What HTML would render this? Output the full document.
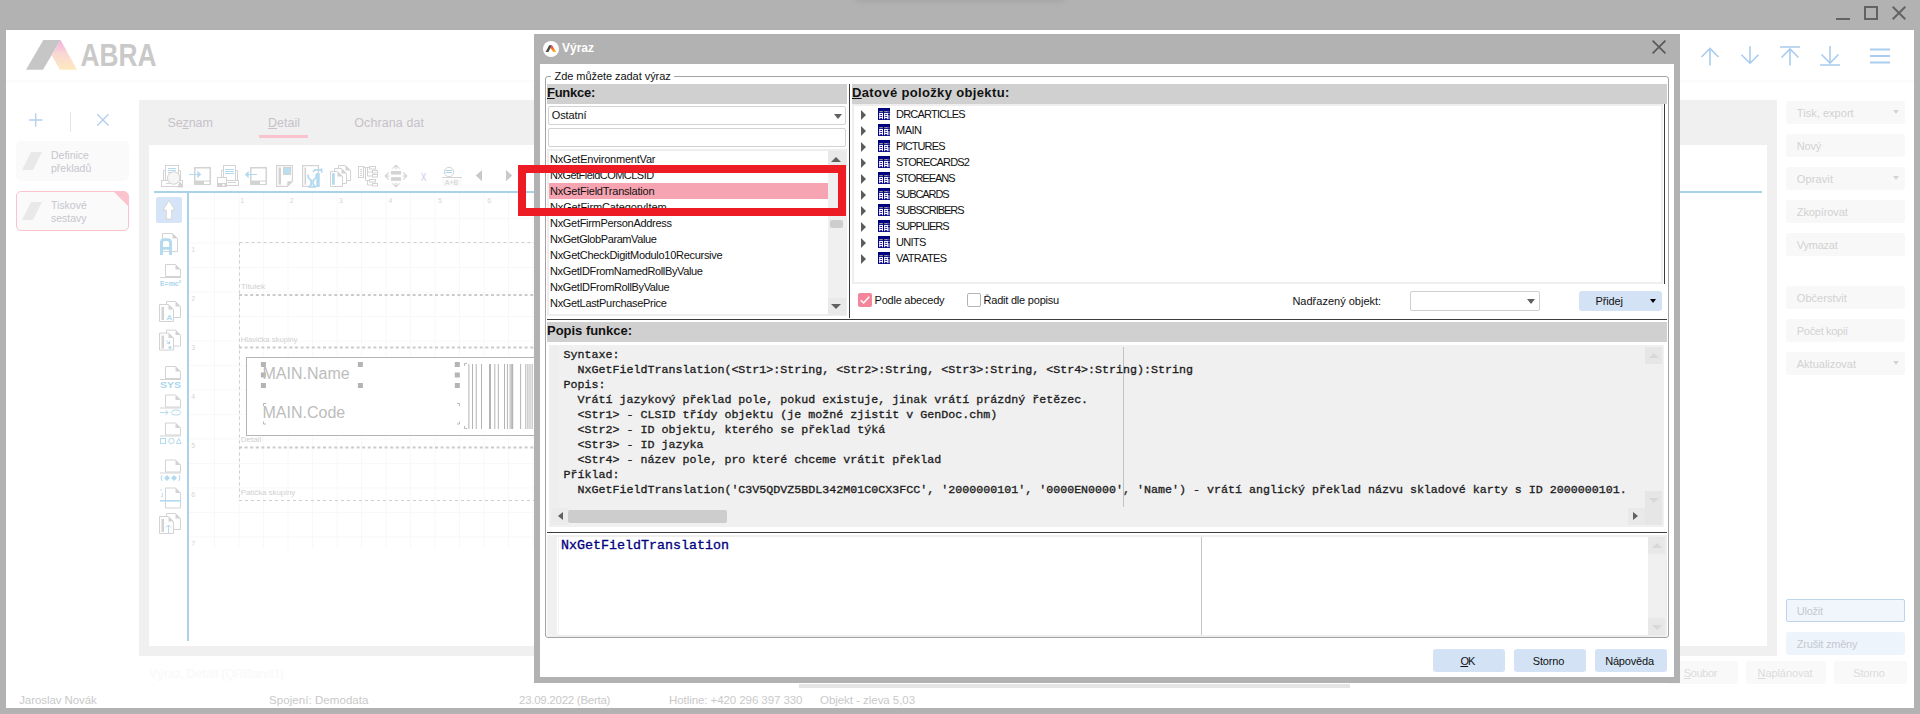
<!DOCTYPE html>
<html lang="cs">
<head>
<meta charset="utf-8">
<title>Výraz</title>
<style>
*{box-sizing:border-box;margin:0;padding:0}
html,body{width:1920px;height:714px;overflow:hidden}
body{background:#b2b2b2;position:relative;font-family:"Liberation Sans",sans-serif;font-size:11px;color:#111}
.a{position:absolute}
.t{position:absolute;white-space:nowrap;line-height:1}
u{text-decoration-thickness:1px;text-underline-offset:1px}
/* faded background app */
.app{left:6px;top:30px;width:1908px;height:678px;background:#fff}
.band{left:6px;top:80px;width:1908px;height:4px;background:linear-gradient(#fbfbfb,#fdfdfd 60%,#fff)}
.gp{left:139px;top:100px;width:1638px;height:556px;background:#f0f0f0}
.wp{left:149px;top:145px;width:1618px;height:501px;background:#fff}
.card{left:16px;width:113px;height:40px;background:#fafafa;border-radius:5px}
.card .t{left:35px;font-size:10.5px;line-height:12.5px;color:#c6c6cc;white-space:normal}
.para{left:6px;top:11px;width:20px;height:18px;background:#e9e9e9;clip-path:polygon(45% 0,100% 0,55% 100%,0 100%)}
.tab{font-size:12.5px;color:#c6c2c8;top:117px}
.rb{left:1786px;width:119px;height:23px;background:#f8f8f8;border-radius:3px;font-size:11px;color:#d2d2d2;line-height:25px;padding-left:10.8px;white-space:nowrap;overflow:hidden}
.rb i{position:absolute;right:6px;top:9px;border:3.5px solid transparent;border-top:4px solid #d4d4d4;border-bottom:0}
.st{top:695px;font-size:11.5px;color:#c9c9c9}
/* dialog */
.dlg{left:534px;top:34px;width:1146px;height:649px;background:#b2b2b2}
.dlgin{left:540px;top:64px;width:1134px;height:613px;background:#fff}
.hb{background:#d0d0d0;height:20px}
.hb .t{left:0;top:2px;font-size:13px;font-weight:bold;color:#111;letter-spacing:-.1px}
.btn{background:#d3e3f5;border-radius:3px;height:23px;text-align:center;line-height:25px;padding-right:3px;overflow:hidden;font-size:11px;color:#111;letter-spacing:-.2px}
.li{left:550px;font-size:11px;letter-spacing:-.24px;color:#111}
.tri{width:0;height:0;border:5.200px solid transparent;border-left:5.800px solid #5c5c5c;border-right:0}
.tr{left:896px;font-size:11px;letter-spacing:-.3px;color:#111}
.mono{font-family:"Liberation Mono",monospace;font-weight:normal;-webkit-text-stroke:.32px currentColor;white-space:pre}
</style>
</head>
<body>
<!-- ===== OS window controls ===== -->
<div class="a" style="left:1836px;top:18px;width:14px;height:2px;background:#636363"></div>
<div class="a" style="left:1864px;top:6px;width:14px;height:14px;border:2px solid #636363"></div>
<svg class="a" style="left:1892px;top:6px" width="14" height="14" viewBox="0 0 14 14"><path d="M.7.7 13.3 13.3M13.3.7.7 13.3" stroke="#636363" stroke-width="2" fill="none"/></svg>

<div class="a" style="left:856px;top:-7px;width:208px;height:7px;box-shadow:0 0 6px 1px rgba(0,0,0,.09)"></div>
<!-- ===== faded application window ===== -->
<div class="a app"></div>
<div class="a band"></div>
<svg class="a" style="left:20px;top:36px" width="150" height="40" viewBox="20 36 150 40">
<defs><linearGradient id="lg" x1="0" y1="0" x2="0" y2="1"><stop offset="0" stop-color="#f4aee0"/><stop offset=".45" stop-color="#f9d7d3"/><stop offset="1" stop-color="#fde9bf"/></linearGradient></defs>
<polygon points="43.3,40 60.6,40 43,69.8 26,69.8" fill="#c6c6c6"/>
<polygon points="60.6,40 77,69.8 60,69.8 51.6,55.2" fill="url(#lg)"/>
<text x="80.5" y="65.8" font-family="Liberation Sans, sans-serif" font-weight="bold" font-size="31.5" fill="#c9c9c9" textLength="76" lengthAdjust="spacingAndGlyphs">ABRA</text>
</svg>
<svg class="a" style="left:28px;top:112px" width="90" height="22" viewBox="28 112 90 22"><path d="M35.7 113.2v13.6M28.9 120h13.6" stroke="#b5cfee" stroke-width="1.4" fill="none"/><path d="M70.5 112v20" stroke="#dfe6f0" stroke-width="1"/><path d="M97.3 114.3l11.2 11.2M108.5 114.3l-11.2 11.2" stroke="#b5cfee" stroke-width="1.4" fill="none"/></svg>
<div class="a card" style="top:141px"><div class="a para"></div><div class="t" style="top:8px">Definice<br>překladů</div></div>
<div class="a card" style="top:191px;border:1px solid #fac3ce;overflow:hidden"><div class="a para" style="left:5px;top:10px"></div><div class="t" style="left:34px;top:7px">Tiskové<br>sestavy</div><div class="a" style="right:0;top:0;width:14px;height:14px;background:#fac3ce;clip-path:polygon(0 0,100% 0,100% 100%)"></div></div>
<div class="a gp"></div>
<div class="a wp"></div>
<div class="t tab" style="letter-spacing:-0.096px;left:167.5px">Se<u>z</u>nam</div>
<div class="t tab" style="letter-spacing:0.005px;left:268px"><u>D</u>etail</div>
<div class="t tab" style="letter-spacing:0.109px;left:354.2px">Ochrana dat</div>
<div class="a" style="left:259px;top:135px;width:49px;height:3px;background:#f9c2cd"></div>
<svg class="a" style="left:149px;top:145px" width="1618" height="501" viewBox="149 145 1618 501" shape-rendering="auto">
<g stroke="#f8f8f8" stroke-width="1">
<path d="M214.6 193V549"/>
<path d="M239.1 193V549"/>
<path d="M263.6 193V549"/>
<path d="M288.1 193V549"/>
<path d="M312.6 193V549"/>
<path d="M337.1 193V549"/>
<path d="M361.6 193V549"/>
<path d="M386.1 193V549"/>
<path d="M410.6 193V549"/>
<path d="M435.1 193V549"/>
<path d="M459.6 193V549"/>
<path d="M484.1 193V549"/>
<path d="M508.6 193V549"/>
<path d="M533.1 193V549"/>
<path d="M189 218.4H534"/>
<path d="M189 242.9H534"/>
<path d="M189 267.4H534"/>
<path d="M189 291.9H534"/>
<path d="M189 316.4H534"/>
<path d="M189 340.9H534"/>
<path d="M189 365.4H534"/>
<path d="M189 389.9H534"/>
<path d="M189 414.4H534"/>
<path d="M189 438.9H534"/>
<path d="M189 463.4H534"/>
<path d="M189 487.9H534"/>
<path d="M189 512.4H534"/>
<path d="M189 536.9H534"/>
</g>
<text x="240.3" y="203" font-family="Liberation Sans, sans-serif" font-size="7" fill="#d6d6d6">1</text>
<text x="289.7" y="203" font-family="Liberation Sans, sans-serif" font-size="7" fill="#d6d6d6">2</text>
<text x="339.1" y="203" font-family="Liberation Sans, sans-serif" font-size="7" fill="#d6d6d6">3</text>
<text x="388.5" y="203" font-family="Liberation Sans, sans-serif" font-size="7" fill="#d6d6d6">4</text>
<text x="437.9" y="203" font-family="Liberation Sans, sans-serif" font-size="7" fill="#d6d6d6">5</text>
<text x="487.3" y="203" font-family="Liberation Sans, sans-serif" font-size="7" fill="#d6d6d6">6</text>
<text x="191.300" y="251.8" font-family="Liberation Sans, sans-serif" font-size="7" fill="#d6d6d6">1</text>
<text x="191.300" y="300.9" font-family="Liberation Sans, sans-serif" font-size="7" fill="#d6d6d6">2</text>
<text x="191.300" y="350.0" font-family="Liberation Sans, sans-serif" font-size="7" fill="#d6d6d6">3</text>
<text x="191.300" y="399.1" font-family="Liberation Sans, sans-serif" font-size="7" fill="#d6d6d6">4</text>
<text x="191.300" y="448.2" font-family="Liberation Sans, sans-serif" font-size="7" fill="#d6d6d6">5</text>
<text x="191.300" y="497.3" font-family="Liberation Sans, sans-serif" font-size="7" fill="#d6d6d6">6</text>
<text x="191.300" y="546.4" font-family="Liberation Sans, sans-serif" font-size="7" fill="#d6d6d6">7</text>
<rect x="165.5" y="165.5" width="13" height="15" fill="#fff" stroke="#d3d3d3"/><path d="M168 168.5h8M168 170.5h8M168 172.5h4" stroke="#b3daee"/>
<path d="M165.5 170.5h-2v10M178.5 170.5h2v10" fill="none" stroke="#d3d3d3"/>
<rect x="161.500" y="180.500" width="21" height="6" fill="#fff" stroke="#d3d3d3"/><path d="M166 183.500h4M180 182l3 5h-5z" stroke="#d3d3d3" fill="#d3d3d3"/>
<circle cx="173.700" cy="178" r="6.200" fill="#f6f6f6" stroke="#d3d3d3"/>
<rect x="194.750" y="167.750" width="15.500" height="16.500" fill="#fff" stroke="#d3d3d3" stroke-width="1.500"/><rect x="194" y="180.500" width="17" height="4.500" fill="#d3d3d3"/><rect x="204" y="181.500" width="5.500" height="2.500" fill="#fff"/>
<path d="M189 174.500h9" stroke="#b3daee"/><path d="M197.300 170.800l4 3.700-4 3.700z" fill="#b3daee"/>
<rect x="223.500" y="165.500" width="12" height="15" fill="#fff" stroke="#d3d3d3"/><path d="M225 169.500h9M225 171.500h9M225 173.500h9" stroke="#b3daee"/>
<path d="M223.500 170.500h-2v8M235.500 170.500h2v10" fill="none" stroke="#d3d3d3"/>
<rect x="226.500" y="180.500" width="12" height="5" fill="#fff" stroke="#d3d3d3"/><path d="M228 182.500h8" stroke="#d3d3d3"/>
<rect x="217.500" y="177.500" width="9" height="9" fill="#fff" stroke="#d3d3d3"/><rect x="218" y="183" width="8" height="3.500" fill="#d3d3d3"/><rect x="222.500" y="184" width="2" height="2" fill="#fff"/>
<rect x="250.750" y="167.750" width="15.500" height="16.500" fill="#fff" stroke="#d3d3d3" stroke-width="1.500"/><rect x="250" y="180.500" width="17" height="4.500" fill="#d3d3d3"/><rect x="260" y="181.500" width="5.500" height="2.500" fill="#fff"/>
<path d="M248 174.500h9" stroke="#b3daee"/><path d="M248.700 170.800l-4 3.700 4 3.700z" fill="#b3daee"/>
<path d="M276.600 165.600h15.800v15.700l-5 5.100h-10.800z" fill="#fff" stroke="#d3d3d3" stroke-width="1.200"/><path d="M287.300 181.300h5l-5 5z" fill="#d3d3d3"/><rect x="278.500" y="167.500" width="2.500" height="17.200" fill="#d3d3d3"/><rect x="283.500" y="167.500" width="7" height="7" fill="#b9dff0" stroke="#d3d3d3"/>
<rect x="302.600" y="165.600" width="15.800" height="20.800" fill="#fff" stroke="#d3d3d3" stroke-width="1.200"/><rect x="304.500" y="167.500" width="1.600" height="17.200" fill="#d3d3d3"/>
<path d="M308.200 174.500v3l3 3v3.500l-1.700 2.900h5.400l-1.700-2.900v-3.500l3-3v-3" fill="none" stroke="#b3daee" stroke-width="1.800"/><rect x="316.300" y="173" width="3.400" height="14" fill="#b3daee"/><path d="M312.800 171.900l2.200-2h6.300M321.600 168.200v4.600" stroke="#b3daee" stroke-width="1.600" fill="none"/>
<path d="M338.5 165.5h7l5 5v10h-12z" fill="#fff" stroke="#d3d3d3"/><path d="M345.5 165.5v5h5z" fill="#d3d3d3"/><path d="M334.5 168.5h7l5 5v10h-12z" fill="#fff" stroke="#d3d3d3"/><path d="M341.5 168.5v5h5z" fill="#d3d3d3"/><path d="M330.5 171.5h7l5 5v10h-12z" fill="#fff" stroke="#d3d3d3"/><path d="M337.5 171.5v5h5z" fill="#d3d3d3"/><rect x="332" y="173.200" width="2.800" height="11.600" fill="#b3daee"/>
<rect x="358.500" y="166.500" width="5" height="11" fill="#fff" stroke="#d3d3d3"/><path d="M360 169.500h2M360 171.500h2M360 173.500h2M360 175.500h2" stroke="#d3d3d3"/>
<path d="M363.500 167.500h2v13h2M365.500 167.500h4M367.500 172h5M367.500 167.500v8.500h5M367.500 180.500h2M367.500 180.500v4.500h5" fill="none" stroke="#d3d3d3"/>
<rect x="369.5" y="166.5" width="6" height="2.500" fill="#fff" stroke="#d3d3d3"/>
<rect x="372.5" y="170.5" width="5" height="2.500" fill="#fff" stroke="#d3d3d3"/>
<rect x="372.5" y="174.5" width="5" height="2.500" fill="#fff" stroke="#d3d3d3"/>
<rect x="369.5" y="179.5" width="6" height="2.500" fill="#fff" stroke="#d3d3d3"/>
<rect x="372.5" y="183.5" width="5" height="2.500" fill="#fff" stroke="#d3d3d3"/>
<rect x="391" y="171" width="10" height="3.600" fill="#d3d3d3"/><rect x="391" y="177.200" width="10" height="3.600" fill="#d3d3d3"/>
<path d="M392.500 168.700l3.500-3.500 3.500 3.500M396 165.500v4M392.500 183.300l3.500 3.500 3.500-3.500M396 186.500v-4M388.700 172.500l-3.500 3.500 3.500 3.500M385.500 176h4M403.300 172.500l3.500 3.500-3.500 3.500M406.500 176h-4" fill="none" stroke="#d3d3d3" stroke-width="1.100"/>
<text x="420.700" y="180.800" font-family="Liberation Sans, sans-serif" font-size="10.500" fill="#c6cae8" textLength="5.600" lengthAdjust="spacingAndGlyphs">X</text>
<circle cx="449" cy="172" r="4.700" fill="#fff" stroke="#d3d3d3"/><path d="M445.500 170.500h6.500M445.500 172.500h6.500" stroke="#a5d4ec"/><path d="M442 177.500h20" stroke="#d3d3d3"/><rect x="442" y="179" width="20" height="7" fill="#fafafa"/><text x="444.800" y="185.200" font-family="Liberation Sans, sans-serif" font-size="6.500" fill="#d0d0d0" textLength="13.500" lengthAdjust="spacingAndGlyphs">A+B</text>
<path d="M482 170v11.200l-6.200-5.600z" fill="#c9c9c9"/><path d="M506 170v11.200l6.200-5.600z" fill="#c9c9c9"/>
<rect x="154" y="191" width="1608" height="2" fill="#a9d3ea"/><rect x="187" y="193" width="2" height="448" fill="#a9d3ea"/>
<rect x="156" y="197" width="26" height="26" rx="2.500" fill="#d5e4f6"/><path d="M169 200.500l-6 9.500h3.300v9h5.400v-9h3.300z" fill="#fff" stroke="#d2d2d2" stroke-width=".9"/>
<path d="M162.5 233.5h10l5 5v13h-15z" fill="#fff" stroke="#d3d3d3"/><path d="M172.5 233.5v5h5z" fill="#d3d3d3"/>
<path fill-rule="evenodd" d="M160 255V242.500q0-4.300 4.300-4.300h3.400q4.300 0 4.300 4.300V255h-2.900v-5.300h-6.200V255zM162.900 247h6.200v-4q0-2-2-2h-2.200q-2 0-2 2z" fill="#b3daee"/>
<path d="M165.5 264.5h10l5 5v7h-15z" fill="#fff" stroke="#d3d3d3"/><path d="M175.5 264.5v5h5z" fill="#d3d3d3"/><path d="M160 277.500h21" stroke="#d3d3d3"/>
<text x="160" y="286" font-family="Liberation Sans, sans-serif" font-weight="bold" fill="#a9d5ec" font-size="8" textLength="21" lengthAdjust="spacingAndGlyphs">E=mc²</text>
<path d="M166.5 301.5h9l5 5v11h-14z" fill="#fff" stroke="#d3d3d3"/><path d="M175.5 301.5v5h5z" fill="#d3d3d3"/><path d="M159.5 304.5h9l5 5v12h-14z" fill="#fdfdfd" stroke="#d3d3d3"/><path d="M168.5 304.5v5h5z" fill="#d3d3d3"/><rect x="161.500" y="307" width="2.500" height="13" fill="#d3d3d3"/>
<text x="166.500" y="320" font-family="Liberation Sans, sans-serif" font-weight="bold" font-size="8" fill="#b3daee">A</text>
<path d="M166.5 330.1h9l5 5v11h-14z" fill="#fff" stroke="#d3d3d3"/><path d="M175.5 330.1v5h5z" fill="#d3d3d3"/><path d="M159.5 333.1h9l5 5v12h-14z" fill="#fdfdfd" stroke="#d3d3d3"/><path d="M168.5 333.1v5h5z" fill="#d3d3d3"/><rect x="161.500" y="335.6" width="2.500" height="13" fill="#d3d3d3"/>
<path d="M166.500 340.6l3 3m0-2.500v2.500h-2.500" stroke="#b3daee" fill="none"/><circle cx="170" cy="347.6" r="1.500" fill="#b3daee"/>
<path d="M165.5 366.5h10l5 5v7h-15z" fill="#fff" stroke="#d3d3d3"/><path d="M175.5 366.5v5h5z" fill="#d3d3d3"/><path d="M160 379.500h21" stroke="#d3d3d3"/>
<text x="160" y="388" font-family="Liberation Sans, sans-serif" font-weight="bold" fill="#a9d5ec" font-size="8.500" textLength="21" lengthAdjust="spacingAndGlyphs">SYS</text>
<path d="M165.5 395h10l5 5v7h-15z" fill="#fff" stroke="#d3d3d3"/><path d="M175.5 395v5h5z" fill="#d3d3d3"/><path d="M160 408h21" stroke="#d3d3d3"/>
<path d="M160 412.500h8m-2.500-2.500l2.500 2.500-2.500 2.500" stroke="#b3daee" fill="none"/><ellipse cx="176" cy="412.500" rx="4.500" ry="2.500" fill="none" stroke="#b3daee"/>
<path d="M165.5 423h10l5 5v7h-15z" fill="#fff" stroke="#d3d3d3"/><path d="M175.5 423v5h5z" fill="#d3d3d3"/><path d="M160 436h21" stroke="#d3d3d3"/>
<rect x="160.500" y="438.500" width="5" height="5" fill="none" stroke="#b3daee"/><circle cx="171.500" cy="441" r="2.700" fill="none" stroke="#b3daee"/><path d="M176.500 443.500l2.300-5 2.300 5z" fill="none" stroke="#b3daee"/>
<path d="M165.5 460h10l5 5v7h-15z" fill="#fff" stroke="#d3d3d3"/><path d="M175.5 460v5h5z" fill="#d3d3d3"/><path d="M160 473h21" stroke="#d3d3d3"/>
<path d="M164 478l3-3 3 3-3 3zM171 478l3-3 3 3-3 3z" fill="#b3daee"/><path d="M162 475q-2 3 0 6M179 475q2 3 0 6" fill="none" stroke="#b3daee"/>
<path d="M165.5 488h10l5 5v15h-15z" fill="#fff" stroke="#d3d3d3"/><path d="M175.5 488v5h5z" fill="#d3d3d3"/><rect x="160" y="500" width="21" height="1.600" fill="#b3daee"/><path d="M161 489v2M162.500 493v3M161 496.500h2" stroke="#b3daee" stroke-width=".8"/>
<path d="M166.5 513.5h9l5 5v11h-14z" fill="#fff" stroke="#d3d3d3"/><path d="M175.5 513.5v5h5z" fill="#d3d3d3"/><path d="M159.5 516.5h9l5 5v12h-14z" fill="#fdfdfd" stroke="#d3d3d3"/><path d="M168.5 516.5v5h5z" fill="#d3d3d3"/><rect x="161.500" y="519" width="2.500" height="13" fill="#d3d3d3"/><path d="M168.500 533v-8m-2.500 2.500l2.500-2.500 2.500 2.500" stroke="#b3daee" fill="none"/>
<path d="M239.500 242.500V500.500M239.500 242.500H534" fill="none" stroke="#cfcfcf" stroke-dasharray="3 3"/>
<path d="M239 295H534" stroke="#cbcbcb" stroke-width="2" stroke-dasharray="3 2.600"/>
<path d="M239 347.5H534" stroke="#cbcbcb" stroke-width="2" stroke-dasharray="3 2.600"/>
<path d="M239 447.5H534" stroke="#cbcbcb" stroke-width="2" stroke-dasharray="3 2.600"/>
<path d="M239 500.500H534" stroke="#cfcfcf" stroke-dasharray="3 3"/>
<text x="240.700" y="288.500" font-family="Liberation Sans, sans-serif" font-size="7.500" fill="#d0d0d0" textLength="24.500" lengthAdjust="spacingAndGlyphs">Titulek</text>
<text x="240.700" y="341.500" font-family="Liberation Sans, sans-serif" font-size="7.500" fill="#d0d0d0" textLength="57" lengthAdjust="spacingAndGlyphs">Hlavička skupiny</text>
<text x="240.700" y="441.800" font-family="Liberation Sans, sans-serif" font-size="7.500" fill="#d0d0d0" textLength="20.500" lengthAdjust="spacingAndGlyphs">Detail</text>
<text x="240.700" y="495" font-family="Liberation Sans, sans-serif" font-size="7.500" fill="#d0d0d0" textLength="54.500" lengthAdjust="spacingAndGlyphs">Patička skupiny</text>
<rect x="246.500" y="357.500" width="300" height="78" fill="#fff" stroke="#b4b4b4"/>
<rect x="260.9" y="362" width="5" height="5" fill="#b4b4b4"/>
<rect x="260.9" y="372.5" width="5" height="5" fill="#b4b4b4"/>
<rect x="260.9" y="383" width="5" height="5" fill="#b4b4b4"/>
<rect x="357.9" y="362" width="5" height="5" fill="#b4b4b4"/>
<rect x="357.9" y="383" width="5" height="5" fill="#b4b4b4"/>
<rect x="454.8" y="362" width="5" height="5" fill="#b4b4b4"/>
<rect x="454.8" y="372.5" width="5" height="5" fill="#b4b4b4"/>
<rect x="454.8" y="383" width="5" height="5" fill="#b4b4b4"/>
<text x="262.500" y="378.700" font-family="Liberation Sans, sans-serif" font-size="16" fill="#bcbcbc">MAIN.Name</text>
<text x="262.500" y="417.800" font-family="Liberation Sans, sans-serif" font-size="16" fill="#bcbcbc">MAIN.Code</text>
<path d="M263.500 406v-2.500h2.500M457 403.500h2.500v2.500M263.500 421.500v2.500h2.500M457 424h2.500v-2.500M464.500 366v-2.500h2.500M464.500 426v2.500h2.500" fill="none" stroke="#b8b8b8"/>
<rect x="468.4" y="364" width="1" height="65" fill="#b4b4b4"/>
<rect x="472.0" y="364" width="1" height="65" fill="#b4b4b4"/>
<rect x="475.7" y="364" width="1" height="65" fill="#b4b4b4"/>
<rect x="481.0" y="364" width="1" height="65" fill="#b4b4b4"/>
<rect x="489.0" y="364" width="2" height="65" fill="#b4b4b4"/>
<rect x="494.3" y="364" width="1" height="65" fill="#b4b4b4"/>
<rect x="497.8" y="364" width="1" height="65" fill="#b4b4b4"/>
<rect x="504.0" y="364" width="1" height="65" fill="#b4b4b4"/>
<rect x="506.9" y="364" width="1" height="65" fill="#b4b4b4"/>
<rect x="509.6" y="364" width="1" height="65" fill="#b4b4b4"/>
<rect x="511.2" y="364" width="2" height="65" fill="#b4b4b4"/>
<rect x="520.1" y="364" width="1" height="65" fill="#b4b4b4"/>
<rect x="525.3" y="364" width="1" height="65" fill="#b4b4b4"/>
<rect x="527.4" y="364" width="1" height="65" fill="#b4b4b4"/>
<rect x="529.5" y="364" width="1" height="65" fill="#b4b4b4"/>
<rect x="531.7" y="364" width="1" height="65" fill="#b4b4b4"/>
</svg>
<!--DESIGNER-->
<div class="a rb" style="top:101px"><span style="letter-spacing:0.037px">Tisk, export</span><i></i></div>
<div class="a rb" style="top:134px"><span style="letter-spacing:-0.166px">Nový</span></div>
<div class="a rb" style="top:167px"><span style="letter-spacing:0.119px">Opravit</span><i></i></div>
<div class="a rb" style="top:200px"><span style="letter-spacing:-0.107px">Zkopírovat</span></div>
<div class="a rb" style="top:233px"><span style="letter-spacing:-0.227px">Vymazat</span></div>
<div class="a rb" style="top:286px"><span style="letter-spacing:0.048px">Občerstvit</span></div>
<div class="a rb" style="top:319px"><span style="letter-spacing:-0.311px">Počet kopií</span></div>
<div class="a rb" style="top:352px"><span style="letter-spacing:-0.009px">Aktualizovat</span><i></i></div>
<div class="a rb" style="top:599px;background:#f1f6fc;border:1px solid #bdd3ee;border-radius:2px;color:#c3c9d2;line-height:23px;padding-left:9.800px"><span style="letter-spacing:-0.269px">Uložit</span></div>
<div class="a rb" style="top:632px;background:#eef4fc;color:#c3c9d2"><span style="letter-spacing:-0.206px">Zrušit změny</span></div>
<div class="a rb" style="left:1666px;top:661px;width:72px;text-align:center;padding:0 3px 0 0;background:#f9f9f9;color:#dcdcdc"><span style="letter-spacing:-0.364px"><u>S</u>oubor</span></div>
<div class="a rb" style="left:1746px;top:661px;width:80px;text-align:center;padding:0 2px 0 0;background:#f9f9f9;color:#dcdcdc"><span style="letter-spacing:-0.087px"><u>N</u>aplánovat</span></div>
<div class="a rb" style="left:1834px;top:661px;width:73px;text-align:center;padding:0 3px 0 0;background:#f9f9f9;color:#dcdcdc"><span style="letter-spacing:-0.137px">Storno</span></div>
<svg class="a" style="left:1695px;top:42px" width="200" height="28" viewBox="1695 42 200 28" fill="none" stroke="#aaccee" stroke-width="1.6">
<path d="M1710 65.5V48.5M1701.5 57l8.5-8.5 8.5 8.5"/>
<path d="M1750 46.3V63M1741.5 54.7l8.5 8.5 8.5-8.5"/>
<path d="M1780 47h20M1790 65.5V49M1781.5 57.5l8.5-8.5 8.5 8.5"/>
<path d="M1820 65h20M1830 46V63M1821.5 54.5l8.5 8.5 8.5-8.5"/>
<path d="M1870 49.6h20M1870 56h20M1870 62.4h20" stroke-width="2"/>
</svg>
<div class="t st" style="letter-spacing:-0.073px;left:19.2px">Jaroslav Novák</div>
<div class="t st" style="letter-spacing:0.062px;left:269px">Spojení: Demodata</div>
<div class="t st" style="letter-spacing:-0.267px;left:519px">23.09.2022 (Berta)</div>
<div class="t st" style="letter-spacing:-0.074px;left:669px">Hotline: +420 296 397 330</div>
<div class="t st" style="letter-spacing:-0.042px;left:820px">Objekt - zleva 5,03</div>
<div class="a" style="left:799px;top:683.500px;width:551px;height:4.500px;background:#e5e5e5"></div>
<div class="t" style="letter-spacing:-0.623px;left:149px;top:667px;font-size:13px;font-weight:bold;color:#fafafa">Výraz, Detail (QRBand1)</div>

<!-- ===== dialog ===== -->
<div class="a dlg"></div>
<div class="a dlgin"></div>
<svg class="a" style="left:543px;top:41px" width="16" height="16" viewBox="0 0 16 16">
<defs><linearGradient id="lg2" x1="0" y1="0" x2="0" y2="1"><stop offset="0" stop-color="#e8206c"/><stop offset=".55" stop-color="#f47a20"/><stop offset="1" stop-color="#fdb913"/></linearGradient></defs>
<circle cx="8" cy="8" r="8" fill="#fff"/>
<polygon points="6.2,4.2 9,4.2 5.4,11 2.6,11" fill="#4a4a4a"/>
<polygon points="9,4.2 13.2,11 10.2,11 7.5,6.9" fill="url(#lg2)"/>
</svg>
<div class="t" style="letter-spacing:-0.006px;left:562px;top:42px;font-size:12px;font-weight:bold;color:#fff">Výraz</div>
<svg class="a" style="left:1652px;top:40px" width="14" height="14" viewBox="0 0 14 14"><path d="M.6.6 13.4 13.4M13.4.6.6 13.4" stroke="#5a5a5a" stroke-width="1.7" fill="none"/></svg>
<!-- group box -->
<div class="a" style="left:545px;top:76px;width:1124px;height:562px;border:1px solid #a3a3a3;border-radius:3px"></div>
<div class="a" style="left:551px;top:70px;width:123px;height:12px;background:#fff"></div>
<div class="t" style="letter-spacing:-0.054px;left:554.5px;top:70.7px;font-size:11px;color:#111">Zde můžete zadat výraz</div>
<!-- left: functions -->
<div class="a hb" style="left:547px;top:84px;width:300px"><div class="t" style="letter-spacing:-0.266px"><u>F</u>unkce:</div></div>
<div class="a" style="left:548px;top:106px;width:298px;height:19px;border:1px solid #d2d2d2;border-radius:2px;background:#fff"></div>
<div class="t" style="letter-spacing:-0.110px;left:551.7px;top:110px;font-size:11px">Ostatní</div>
<div class="a" style="left:834px;top:113.5px;border:4.5px solid transparent;border-top:5.5px solid #606060;border-bottom:0"></div>
<div class="a" style="left:548px;top:128px;width:298px;height:19px;border:1px solid #d2d2d2;border-radius:2px;background:#fff"></div>
<div class="a" style="left:547px;top:149px;width:300px;height:167px;background:#fff;border:2px solid #efedee"></div>
<div class="a" style="left:828px;top:151px;width:17.500px;height:164px;background:#f0f0f0"></div><div class="a" style="left:828px;top:151px;width:17.500px;height:14px;background:#e9e9e9"></div><div class="a" style="left:828px;top:298px;width:17.500px;height:17px;background:#e9e9e9"></div>
<div class="a" style="left:549px;top:183px;width:279px;height:16px;background:#f7a4b2"></div>
<div class="t li" style="letter-spacing:-0.207px;top:151px;line-height:16px">NxGetEnvironmentVar</div>
<div class="t li" style="letter-spacing:-0.527px;top:167px;line-height:16px">NxGetFieldCOMCLSID</div>
<div class="t li" style="letter-spacing:-0.225px;top:183px;line-height:16px">NxGetFieldTranslation</div>
<div class="t li" style="letter-spacing:-0.129px;top:199px;line-height:16px">NxGetFirmCategoryItem</div>
<div class="t li" style="letter-spacing:-0.308px;top:215px;line-height:16px">NxGetFirmPersonAddress</div>
<div class="t li" style="letter-spacing:-0.407px;top:231px;line-height:16px">NxGetGlobParamValue</div>
<div class="t li" style="letter-spacing:-0.290px;top:247px;line-height:16px">NxGetCheckDigitModulo10Recursive</div>
<div class="t li" style="letter-spacing:-0.367px;top:263px;line-height:16px">NxGetIDFromNamedRollByValue</div>
<div class="t li" style="letter-spacing:-0.352px;top:279px;line-height:16px">NxGetIDFromRollByValue</div>
<div class="t li" style="letter-spacing:-0.318px;top:295px;line-height:16px">NxGetLastPurchasePrice</div>

<div class="a" style="left:831px;top:156.5px;border:5px solid transparent;border-bottom:5.5px solid #606060;border-top:0"></div>
<div class="a" style="left:830px;top:220px;width:13px;height:8px;background:#cdcdcd;border-radius:2px"></div>
<div class="a" style="left:831px;top:304px;border:5px solid transparent;border-top:5.5px solid #606060;border-bottom:0"></div>
<!-- splitter -->
<div class="a" style="left:849px;top:84px;width:1px;height:234px;background:#3c3c3c"></div>
<!-- right: data items -->
<div class="a hb" style="left:852px;top:84px;width:815px"><div class="t" style="letter-spacing:0.351px"><u>D</u>atové položky objektu:</div></div>
<div class="a" style="left:852px;top:104px;width:811px;height:180px;background:#fff;border:2px solid #efedee"></div>
<div class="a" style="left:1664px;top:104px;width:1px;height:180px;background:#3c3c3c"></div>
<svg width="0" height="0" style="position:absolute"><defs><g id="tbl"><rect width="12" height="12" fill="#000080"/><g fill="#b8b6a2"><rect x="1.300" y="3.200" width="3.600" height="1"/><rect x="6.200" y="3.200" width="3.600" height="1"/><rect x="10.400" y="3.200" width=".9" height="1"/></g><g fill="#fff"><rect x="1.3" y="5" width="1" height="6.200"/><rect x="3.9" y="5" width="1" height="6.200"/><rect x="1.3" y="5" width="3.600" height="1"/><rect x="1.3" y="7" width="3.600" height="1"/><rect x="1.3" y="9" width="3.600" height="1"/><rect x="6.2" y="5" width="1" height="6.200"/><rect x="8.8" y="5" width="1" height="6.200"/><rect x="6.2" y="5" width="3.600" height="1"/><rect x="6.2" y="7" width="3.600" height="1"/><rect x="6.2" y="9" width="3.600" height="1"/><rect x="10.500" y="5" width=".9" height="1"/><rect x="10.500" y="7" width=".9" height="4.200"/></g></g></defs></svg>
<div class="a tri" style="left:860.800px;top:110.3px"></div><svg class="a" style="left:878px;top:108px" width="12" height="12"><use href="#tbl"/></svg><div class="t tr" style="letter-spacing:-0.776px;top:106px;line-height:16px">DRCARTICLES</div>
<div class="a tri" style="left:860.800px;top:126.3px"></div><svg class="a" style="left:878px;top:124px" width="12" height="12"><use href="#tbl"/></svg><div class="t tr" style="letter-spacing:-0.525px;top:122px;line-height:16px">MAIN</div>
<div class="a tri" style="left:860.800px;top:142.3px"></div><svg class="a" style="left:878px;top:140px" width="12" height="12"><use href="#tbl"/></svg><div class="t tr" style="letter-spacing:-0.878px;top:138px;line-height:16px">PICTURES</div>
<div class="a tri" style="left:860.800px;top:158.3px"></div><svg class="a" style="left:878px;top:156px" width="12" height="12"><use href="#tbl"/></svg><div class="t tr" style="letter-spacing:-0.848px;top:154px;line-height:16px">STORECARDS2</div>
<div class="a tri" style="left:860.800px;top:174.3px"></div><svg class="a" style="left:878px;top:172px" width="12" height="12"><use href="#tbl"/></svg><div class="t tr" style="letter-spacing:-1.006px;top:170px;line-height:16px">STOREEANS</div>
<div class="a tri" style="left:860.800px;top:190.3px"></div><svg class="a" style="left:878px;top:188px" width="12" height="12"><use href="#tbl"/></svg><div class="t tr" style="letter-spacing:-1.066px;top:186px;line-height:16px">SUBCARDS</div>
<div class="a tri" style="left:860.800px;top:206.3px"></div><svg class="a" style="left:878px;top:204px" width="12" height="12"><use href="#tbl"/></svg><div class="t tr" style="letter-spacing:-1.024px;top:202px;line-height:16px">SUBSCRIBERS</div>
<div class="a tri" style="left:860.800px;top:222.3px"></div><svg class="a" style="left:878px;top:220px" width="12" height="12"><use href="#tbl"/></svg><div class="t tr" style="letter-spacing:-1.017px;top:218px;line-height:16px">SUPPLIERS</div>
<div class="a tri" style="left:860.800px;top:238.3px"></div><svg class="a" style="left:878px;top:236px" width="12" height="12"><use href="#tbl"/></svg><div class="t tr" style="letter-spacing:-0.680px;top:234px;line-height:16px">UNITS</div>
<div class="a tri" style="left:860.800px;top:254.3px"></div><svg class="a" style="left:878px;top:252px" width="12" height="12"><use href="#tbl"/></svg><div class="t tr" style="letter-spacing:-0.641px;top:250px;line-height:16px">VATRATES</div>

<!-- checkbox row -->
<div class="a" style="left:858px;top:293px;width:14px;height:14px;background:#f4859b;border-radius:2px"></div>
<svg class="a" style="left:858px;top:293px" width="14" height="14" viewBox="0 0 14 14"><path d="M2.8 7.3 5.6 10 11.2 3.8" stroke="#fff" stroke-width="1.5" fill="none"/></svg>
<div class="t" style="letter-spacing:-0.237px;left:874.6px;top:294.800px;font-size:11px">Podle abecedy</div>
<div class="a" style="left:967px;top:293px;width:14px;height:14px;background:#fff;border:1px solid #b4b4b4;border-radius:2px"></div>
<div class="t" style="letter-spacing:-0.212px;left:983.5px;top:294.800px;font-size:11px">Řadit dle popisu</div>
<div class="t" style="letter-spacing:0.008px;left:1292.4px;top:296px;font-size:11px">Nadřazený objekt:</div>
<div class="a" style="left:1410px;top:291px;width:130px;height:20px;border:1px solid #cfcfcf;border-radius:2px;background:#fff"></div>
<div class="a" style="left:1527px;top:298.5px;border:4.8px solid transparent;border-top:5.5px solid #606060;border-bottom:0"></div>
<div class="a btn" style="left:1579px;top:291px;width:83px;height:20px;line-height:20px;text-align:left"><span class="t" style="letter-spacing:-0.137px;left:16.5px;top:4.5px">Přidej</span></div>
<div class="a" style="left:1649.5px;top:299px;border:3.8px solid transparent;border-top:4.3px solid #000;border-bottom:0"></div>
<!-- separator + description -->
<div class="a" style="left:547px;top:318.5px;width:1120px;height:1px;background:#3c3c3c"></div>
<div class="a hb" style="left:547px;top:322px;width:1120px"><div class="t" style="letter-spacing:-0.019px">Popis funkce:</div></div>
<div class="a" style="left:549px;top:345px;width:1115px;height:182px;background:#f0f0f0"></div>
<div class="a" style="left:549px;top:345px;width:10px;height:162px;background:#eeeeee"></div>
<div class="a" style="left:1123px;top:347px;width:1px;height:160px;background:#c2c2c2"></div>
<div class="t mono" style="left:563.5px;top:348.4px;font-size:11.665px;line-height:15px;color:#1c1c1c">Syntaxe:</div>
<div class="t mono" style="left:563.5px;top:363.4px;font-size:11.665px;line-height:15px;color:#1c1c1c">  NxGetFieldTranslation(&lt;Str1&gt;:String, &lt;Str2&gt;:String, &lt;Str3&gt;:String, &lt;Str4&gt;:String):String</div>
<div class="t mono" style="left:563.5px;top:378.4px;font-size:11.665px;line-height:15px;color:#1c1c1c">Popis:</div>
<div class="t mono" style="left:563.5px;top:393.4px;font-size:11.665px;line-height:15px;color:#1c1c1c">  Vrátí jazykový překlad pole, pokud existuje, jinak vrátí prázdný řetězec.</div>
<div class="t mono" style="left:563.5px;top:408.4px;font-size:11.665px;line-height:15px;color:#1c1c1c">  &lt;Str1&gt; - CLSID třídy objektu (je možné zjistit v GenDoc.chm)</div>
<div class="t mono" style="left:563.5px;top:423.4px;font-size:11.665px;line-height:15px;color:#1c1c1c">  &lt;Str2&gt; - ID objektu, kterého se překlad týká</div>
<div class="t mono" style="left:563.5px;top:438.4px;font-size:11.665px;line-height:15px;color:#1c1c1c">  &lt;Str3&gt; - ID jazyka</div>
<div class="t mono" style="left:563.5px;top:453.4px;font-size:11.665px;line-height:15px;color:#1c1c1c">  &lt;Str4&gt; - název pole, pro které chceme vrátit překlad</div>
<div class="t mono" style="left:563.5px;top:468.4px;font-size:11.665px;line-height:15px;color:#1c1c1c">Příklad:</div>
<div class="t mono" style="left:563.5px;top:483.4px;font-size:11.665px;line-height:15px;color:#1c1c1c">  NxGetFieldTranslation('C3V5QDVZ5BDL342M01C0CX3FCC', '2000000101', '0000EN0000', 'Name') - vrátí anglický překlad názvu skladové karty s ID 2000000101.</div>

<div class="a" style="left:1645px;top:347px;width:17px;height:17px;background:#e6e6e6"></div>
<div class="a" style="left:1648.500px;top:352.500px;border:5px solid transparent;border-bottom:5px solid #d8d8d8;border-top:0"></div>
<div class="a" style="left:1645px;top:491px;width:17px;height:34px;background:#e6e6e6"></div>
<div class="a" style="left:1648.500px;top:497.500px;border:5px solid transparent;border-top:5px solid #d8d8d8;border-bottom:0"></div>
<div class="a" style="left:1628px;top:508px;width:17px;height:17px;background:#e9e9e9"></div>
<div class="a" style="left:1633px;top:511.5px;border:4.5px solid transparent;border-left:5.6px solid #606060;border-right:0"></div>
<div class="a" style="left:551px;top:508px;width:17px;height:17px;background:#ebebeb"></div>
<div class="a" style="left:557.6px;top:511.5px;border:4.5px solid transparent;border-right:5.6px solid #606060;border-left:0"></div>
<div class="a" style="left:568px;top:510px;width:159px;height:13px;background:#cdcdcd;border-radius:2px"></div>
<!-- separator + editor -->
<div class="a" style="left:547px;top:532px;width:1120px;height:1px;background:#3c3c3c"></div>
<div class="a" style="left:547px;top:535px;width:1120px;height:102px;border:2px solid #efedee"></div><div class="a" style="left:547px;top:535px;width:10px;height:102px;background:#f0f0f0"></div><div class="a" style="left:558px;top:537px;width:1px;height:98px;background:#f4f4f4"></div>
<div class="a" style="left:1201px;top:537px;width:1px;height:98px;background:#c4c4c4"></div>
<div class="t mono" style="left:561px;top:539.4px;font-size:13.332px;color:#000080">NxGetFieldTranslation</div>
<div class="a" style="left:1648px;top:537px;width:17px;height:98px;background:#f0f0f0"></div>
<div class="a" style="left:1648px;top:537px;width:17px;height:17px;background:#e8e8e8"></div>
<div class="a" style="left:1651.500px;top:542.500px;border:5px solid transparent;border-bottom:5px solid #d8d8d8;border-top:0"></div>
<div class="a" style="left:1648px;top:618px;width:17px;height:17px;background:#e8e8e8"></div>
<div class="a" style="left:1651.500px;top:624.500px;border:5px solid transparent;border-top:5px solid #d8d8d8;border-bottom:0"></div>
<!-- dialog buttons -->
<div class="a btn" style="left:1433px;top:649px;width:72px"><span style="letter-spacing:-0.903px"><u>O</u>K</span></div>
<div class="a btn" style="left:1514px;top:649px;width:72px"><span style="letter-spacing:-0.154px">Storno</span></div>
<div class="a btn" style="left:1595px;top:649px;width:72px"><span style="letter-spacing:-0.182px">Nápověda</span></div>

<div class="a" style="left:518px;top:165px;width:328px;height:51px;border:8px solid #ed1c24"></div>
</body>
</html>
